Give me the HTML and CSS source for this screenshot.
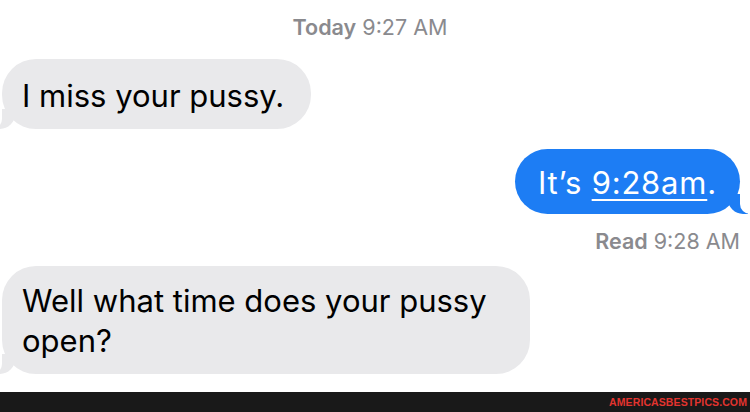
FILE: index.html
```html
<!DOCTYPE html>
<html lang="en">
<head>
<meta charset="utf-8">
<title>Messages</title>
<link rel="stylesheet" href="styles.css">
</head>
<body>
<div class="screen">
  <div class="stamp"><span class="stamp-day">Today</span> 9:27 AM</div>
  <div class="bubble them first">I miss your pussy.</div>
  <div class="bubble me">It’s <span class="link">9:28am</span>.</div>
  <div class="receipt"><span class="receipt-label">Read</span> 9:28 AM</div>
  <div class="bubble them wide">Well what time does your pussy open?</div>
  <div class="footer"><span class="brand">AMERICASBESTPICS.COM</span></div>
</div>
</body>
</html>
```
FILE: styles.css
```css
html, body {
  margin: 0;
  padding: 0;
  background: #ffffff;
}

.screen {
  width: 750px;
  height: 412px;
  display: flex;
  flex-direction: column;
  align-items: flex-start;
  overflow: hidden;
  font-family: Inter, "Noto Sans", "Liberation Sans", sans-serif;
}

.stamp {
  align-self: stretch;
  text-align: center;
  padding: 14px 10px 0 0;
  font-size: 21.5px;
  line-height: 26px;
  color: #8a8a8e;
}

.stamp-day,
.receipt-label {
  font-weight: 600;
}

.bubble {
  position: relative;
  font-size: 31px;
  line-height: 40px;
  border-radius: 34px;
  padding: 17px 27px 13px 20px;
  box-sizing: border-box;
}

.bubble.them {
  background: #e9e9eb;
  color: #000000;
  margin-left: 2px;
}

.bubble.them::before {
  content: "";
  position: absolute;
  left: -7px;
  bottom: 0;
  width: 20px;
  height: 20px;
  background: #e9e9eb;
  border-bottom-right-radius: 15px;
}

.bubble.them::after {
  content: "";
  position: absolute;
  left: -10px;
  bottom: 0;
  width: 10px;
  height: 20px;
  background: #ffffff;
  border-bottom-right-radius: 10px;
}

.bubble.first {
  margin-top: 19px;
}

.bubble.me {
  align-self: flex-end;
  margin-top: 20px;
  margin-right: 10px;
  background: #1d7df4;
  color: #ffffff;
  letter-spacing: 0.8px;
  padding: 14px 23px 11px 23px;
}

.bubble.me::before {
  content: "";
  position: absolute;
  right: -8px;
  bottom: 0;
  width: 20px;
  height: 20px;
  background: #1d7df4;
  border-bottom-left-radius: 15px;
}

.bubble.me::after {
  content: "";
  position: absolute;
  right: -10px;
  bottom: 0;
  width: 10px;
  height: 20px;
  background: #ffffff;
  border-bottom-left-radius: 10px;
}

.link {
  text-decoration: underline;
  text-decoration-thickness: 1.5px;
  text-underline-offset: 5px;
}

.receipt {
  align-self: flex-end;
  margin: 14px 10px 0 0;
  font-size: 21.5px;
  line-height: 26px;
  color: #8a8a8e;
}

.bubble.wide {
  margin-top: 12px;
  max-width: 528px;
  padding-top: 15px;
}

.footer {
  margin-top: auto;
  align-self: stretch;
  height: 20px;
  background: #191919;
  display: flex;
  align-items: center;
  justify-content: flex-end;
  padding-right: 3px;
}

.brand {
  font-family: "Liberation Sans", Arial, sans-serif;
  font-weight: 700;
  font-size: 10.5px;
  color: #e3342f;
  letter-spacing: 0.1px;
}
```
